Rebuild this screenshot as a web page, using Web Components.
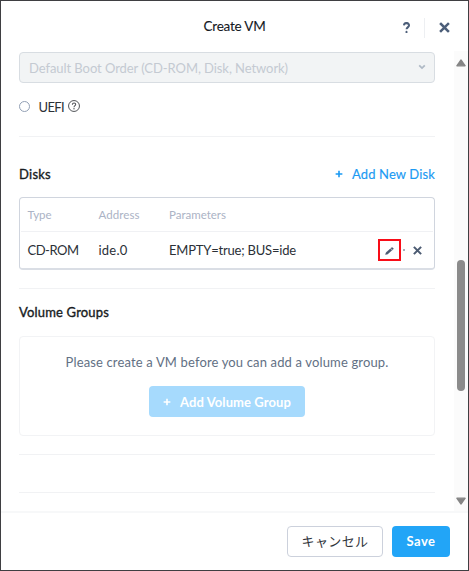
<!DOCTYPE html>
<html lang="en">
<head>
<meta charset="utf-8">
<title>Create VM</title>
<style>
html,body{margin:0;height:100%;overflow:hidden;background:#fff}
body{font:13px/18px Lato,"Noto Sans CJK JP",sans-serif;color:#2b3037}
</style>
</head>
<body>
<vm-dialog></vm-dialog>
<script>
const define=(name,html,init)=>customElements.define(name,class extends HTMLElement{
  connectedCallback(){
    if(this.shadowRoot)return;
    this.attachShadow({mode:'open'}).innerHTML='<style>:host,*{box-sizing:border-box}'+html.replace(/^\s*<style>/,'');
    if(init)init(this,this.shadowRoot);
  }
});

// A single-line label whose tracking is adjusted to fill its width attribute.
define('ui-label',`<style>
:host{display:inline-block;white-space:nowrap;flex:none}
span{display:inline-block}
</style><span></span>`,(el,root)=>{
  const s=root.querySelector('span'),t=el.getAttribute('text'),w=+el.getAttribute('width');
  s.textContent=t;
  if(w){
    const natural=s.getBoundingClientRect().width;
    s.style.letterSpacing=((w-natural)/t.length).toFixed(3)+'px';
    el.style.width=w+'px';
  }
});

const shapes={
  close:'<path d="M1.8 1.8 8.2 8.2M8.2 1.8 1.8 8.2" stroke="currentColor" stroke-width="2.3" stroke-linecap="square"/>',
  plus:'<path d="M5 .8V9.2M.8 5H9.2" stroke="currentColor" stroke-width="2"/>',
  chevron:'<path d="M1.5 3 5 6.4 8.5 3" stroke="currentColor" stroke-width="2.2"/>',
  pencil:'<path d="M.6 9.4 1.2 7 5.9 2.3 7.7 4.1 3 8.8Z M6.5 1.7 7.3.9Q7.8.4 8.3.9L9.1 1.7Q9.6 2.2 9.1 2.7L8.3 3.5Z" fill="currentColor" stroke="currentColor" stroke-width=".5"/>',
  question:'<path d="M2.1 3.1C2.3.4 7.9.3 7.9 3 7.9 4.7 5 4.7 5 6.6" stroke="currentColor" stroke-width="2.1"/><circle cx="5" cy="9" r="1.15" fill="currentColor"/>',
  help:'<circle cx="5" cy="5" r="4.55" stroke="currentColor" stroke-width=".8"/><path d="M3.6 3.9C3.7 2 6.5 2.1 6.4 3.8 6.4 4.7 5 4.8 5 6" stroke="currentColor" stroke-width=".85"/><circle cx="5" cy="7.3" r=".55" fill="currentColor"/>',
  up:'<path d="M5 1.3 9 8.5H1Z" fill="currentColor" stroke="currentColor" stroke-width="1.6" stroke-linejoin="round"/>',
  down:'<path d="M5 8.7 9 1.5H1Z" fill="currentColor" stroke="currentColor" stroke-width="1.6" stroke-linejoin="round"/>'
};
define('ui-icon',`<style>:host{display:inline-block;flex:none}svg{display:block;width:100%;height:100%}</style><svg viewBox="0 0 10 10" preserveAspectRatio="none" fill="none"></svg>`,(el,root)=>{
  const [w,h]=el.getAttribute('size').split(' ');
  el.style.width=w+'px';el.style.height=(h||w)+'px';
  root.querySelector('svg').innerHTML=shapes[el.getAttribute('name')];
});

define('ui-button',`<style>
:host{display:flex;align-items:center;justify-content:center;height:31px;border-radius:4px;font-weight:700;color:#fff;background:#22a5f7;padding-bottom:2px}
:host([kind=plain]){background:#fff;border:1px solid #ccd1dc;font-weight:400;color:#30343b}
:host([kind=disabled]){background:#a6dafd;padding-bottom:0}
</style><slot></slot>`);

define('ui-select',`<style>
:host{display:flex;align-items:center;justify-content:space-between;height:31px;padding:0 8px 0 9px;border:1px solid #d8dde2;border-radius:4px;background:#f2f4f5;color:#c4cad2}
ui-icon{color:#afb9c5;margin-bottom:2px}
</style><slot></slot><ui-icon name="chevron" size="8 8"></ui-icon>`);

define('vm-header',`<style>
:host{display:grid;grid-template-columns:1fr auto 1fr;height:50px;align-items:center;color:#15191f}
ui-label{font-size:13.5px;-webkit-text-stroke:.1px}
.tools{display:flex;align-items:center;justify-content:flex-end;padding:3px 18px 0 0;color:#4c5e79}
i{width:1px;height:20px;background:#edeff2;margin:0 14px 0 13px}
</style><span></span><ui-label text="Create VM" width="62"></ui-label>
<div class="tools"><ui-icon name="question" size="9 11"></ui-icon><i></i><ui-icon name="close" size="11"></ui-icon></div>`);

define('boot-option',`<style>
:host{display:flex;align-items:center;height:20px}
b{width:11px;height:11px;border:1px solid #92a0b5;border-radius:50%;margin-right:8.5px}
ui-label{margin-top:2px}
ui-icon{margin-left:4px;margin-bottom:1px;color:#4b4e53}
</style><b></b><ui-label text="UEFI" width="25.5"></ui-label><ui-icon name="help" size="12"></ui-icon>`);

define('disk-table',`<style>
:host{display:block;height:73px;border:1px solid #d0d5de;border-bottom-width:2px;border-bottom-color:#dadee5;border-radius:4px}
.row{display:grid;grid-template-columns:71px 70.5px 1fr auto;align-items:center;padding:0 12px 0 7.5px;height:36px}
.head{height:34px;border-bottom:1px solid #f0f1f4;margin:0 1px;padding:1px 11px 0 6.5px;color:#abb3c5;font-size:11.5px}
.actions{display:flex;align-items:center;color:#4c5b72}
.edit{display:grid;place-items:center;width:23px;height:22px;border:2px solid #f80d18;padding-top:1px}
.dot{width:2px;height:2px;background:#a7aeb9;margin:0 8px 0 2px}
</style>
<div class="row head"><ui-label text="Type" width="24"></ui-label><ui-label text="Address" width="41"></ui-label><ui-label text="Parameters" width="57"></ui-label></div>
<div class="row"><ui-label text="CD-ROM" width="51"></ui-label><ui-label text="ide.0" width="29"></ui-label><ui-label text="EMPTY=true; BUS=ide" width="127"></ui-label>
<div class="actions"><span class="edit"><ui-icon name="pencil" size="9 8"></ui-icon></span><span class="dot"></span><ui-icon name="close" size="9"></ui-icon></div></div>`);

define('volume-groups',`<style>
:host{display:flex;flex-direction:column;align-items:center;height:100px;border:1px solid #f2f3f5;border-radius:4px;padding-top:16px;color:#627084}
ui-button{width:156px;margin-top:15px}
ui-icon{margin-right:9px}
</style><ui-label text="Please create a VM before you can add a volume group." width="323"></ui-label>
<ui-button kind="disabled"><ui-icon name="plus" size="8"></ui-icon><ui-label text="Add Volume Group" width="111"></ui-label></ui-button>`);

define('scroll-rail',`<style>
:host{display:flex;flex-direction:column;align-items:center;width:14px;background:#fbfbfb;color:#858585;padding:8px 0 6px}
i{width:8px;height:131px;border-radius:4px;background:#8b8b8b;margin:193px 0 106px}
</style><ui-icon name="up" size="10 8"></ui-icon><i></i><ui-icon name="down" size="10 8"></ui-icon>`);

define('vm-dialog',`<style>
:host{display:flex;flex-direction:column;width:469px;height:571px;border:1px solid #3f3f42;background:#fff}
.body{display:flex;height:460px}
.content{flex:1;padding:1px 19px 0 18px}
hr{border:0;height:1px;background:#f1f2f4;margin:0}
.title{display:flex;align-items:center;justify-content:space-between;color:#171b21}
.title>ui-label{-webkit-text-stroke:.35px}
.link{display:flex;align-items:center;color:#1b9af3;gap:9px;-webkit-text-stroke:.15px}
footer{display:flex;justify-content:flex-end;gap:9px;padding:13px 18px 0 0;border-top:2px solid #f7f8f9;flex:1}
footer ui-button{flex:none}
</style>
<vm-header></vm-header>
<div class="body"><div class="content">
<ui-select><ui-label text="Default Boot Order (CD-ROM, Disk, Network)" width="259"></ui-label></ui-select>
<boot-option style="margin-top:13px"></boot-option>
<hr style="margin-top:20px">
<div class="title" style="margin:28px 0 14px"><ui-label text="Disks" width="32"></ui-label><span class="link"><ui-icon name="plus" size="8"></ui-icon><ui-label text="Add New Disk" width="83"></ui-label></span></div>
<disk-table></disk-table>
<hr style="margin-top:18px">
<div class="title" style="margin:14px 0 15px"><ui-label text="Volume Groups" width="90"></ui-label></div>
<volume-groups></volume-groups>
<hr style="margin-top:18px"><hr style="margin-top:37px">
</div><scroll-rail></scroll-rail></div>
<footer><ui-button kind="plain" style="width:96px"><ui-label text="キャンセル" width="67"></ui-label></ui-button><ui-button style="width:58px"><ui-label text="Save" width="29"></ui-label></ui-button></footer>`);
</script>
</body>
</html>
